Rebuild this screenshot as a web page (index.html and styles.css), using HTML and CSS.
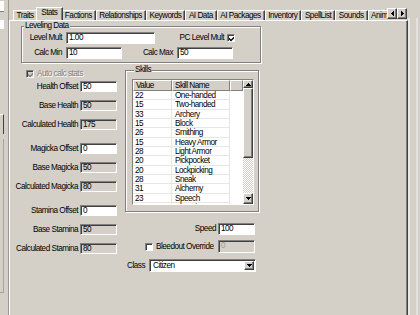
FILE: index.html
```html
<!DOCTYPE html>
<html lang="en">
<head>
    <meta charset="UTF-8">
    <meta name="viewport" content="width=device-width, initial-scale=1.0">
    <title>Actor - Stats</title>
    <link rel="stylesheet" href="styles.css">
</head>
<body>
<div class="window">
    <div class="side">
        <div class="stub stub-a"></div>
        <div class="stub stub-b"></div>
        <div class="stub stub-c"></div>
        <div class="stub-line"></div>
    </div>

    <div class="tabctl">
        <div class="tabbar">
            <div class="tabs">
                <div class="tab">Traits</div>
                <div class="tab active">Stats</div>
                <div class="tab">Factions</div>
                <div class="tab">Relationships</div>
                <div class="tab">Keywords</div>
                <div class="tab">AI Data</div>
                <div class="tab">AI Packages</div>
                <div class="tab">Inventory</div>
                <div class="tab">SpellList</div>
                <div class="tab">Sounds</div>
                <div class="tab">Animation</div>
            </div>
            <div class="tabscroll">
                <div class="btn"><svg width="3" height="5"><path d="M0 2h1v1H0z M1 1h1v3H1z M2 0h1v5H2z"/></svg></div>
                <div class="btn"><svg width="3" height="5"><path d="M2 2h1v1H2z M1 1h1v3H1z M0 0h1v5H0z"/></svg></div>
            </div>
        </div>

        <div class="page">
            <fieldset class="group leveling">
                <legend>Leveling Data</legend>
                <div class="lv-row">
                    <span class="lbl lv-lbl">Level Mult</span>
                    <div class="edit w-lm">1.00</div>
                    <span class="lbl pcl">PC Level Mult</span>
                    <div class="chk"><svg width="6" height="6"><path d="M0 1.6L2 3.6L5.6 0V1.9L2 5.5L0 3.5Z"/></svg></div>
                </div>
                <div class="lv-row">
                    <span class="lbl lv-lbl">Calc Min</span>
                    <div class="edit w-cm">10</div>
                    <span class="lbl cmx">Calc Max</span>
                    <div class="edit w-cm">50</div>
                </div>
            </fieldset>

            <div class="cols">
                <div class="stats-col">
                    <div class="autocalc">
                        <div class="chk dis"><svg width="6" height="6"><path d="M0 1.6L2 3.6L5.6 0V1.9L2 5.5L0 3.5Z"/></svg></div>
                        <span>Auto calc stats</span>
                    </div>

                    <div class="stat-group">
                        <div class="stat-row"><span class="lbl">Health Offset</span><div class="edit">50</div></div>
                        <div class="stat-row"><span class="lbl">Base Health</span><div class="edit ro">50</div></div>
                        <div class="stat-row"><span class="lbl">Calculated Health</span><div class="edit ro">175</div></div>
                    </div>
                    <div class="stat-group">
                        <div class="stat-row"><span class="lbl">Magicka Offset</span><div class="edit">0</div></div>
                        <div class="stat-row"><span class="lbl">Base Magicka</span><div class="edit ro">50</div></div>
                        <div class="stat-row"><span class="lbl">Calculated Magicka</span><div class="edit ro">80</div></div>
                    </div>
                    <div class="stat-group">
                        <div class="stat-row"><span class="lbl">Stamina Offset</span><div class="edit">0</div></div>
                        <div class="stat-row"><span class="lbl">Base Stamina</span><div class="edit ro">50</div></div>
                        <div class="stat-row"><span class="lbl">Calculated Stamina</span><div class="edit ro">80</div></div>
                    </div>
                </div>

                <div class="skills-col">
                    <fieldset class="group skills">
                        <legend>Skills</legend>
                        <div class="listview">
                            <div class="lv-main">
                                <div class="lv-head">
                                    <div class="hd c-val">Value</div>
                                    <div class="hd c-name">Skill Name</div>
                                    <div class="hd c-fill"></div>
                                </div>
                                <div class="lv-item"><span class="c-val">22</span><span class="c-name">One-handed</span></div>
                                <div class="lv-item"><span class="c-val">15</span><span class="c-name">Two-handed</span></div>
                                <div class="lv-item"><span class="c-val">33</span><span class="c-name">Archery</span></div>
                                <div class="lv-item"><span class="c-val">15</span><span class="c-name">Block</span></div>
                                <div class="lv-item"><span class="c-val">26</span><span class="c-name">Smithing</span></div>
                                <div class="lv-item"><span class="c-val">15</span><span class="c-name">Heavy Armor</span></div>
                                <div class="lv-item"><span class="c-val">28</span><span class="c-name">Light Armor</span></div>
                                <div class="lv-item"><span class="c-val">20</span><span class="c-name">Pickpocket</span></div>
                                <div class="lv-item"><span class="c-val">20</span><span class="c-name">Lockpicking</span></div>
                                <div class="lv-item"><span class="c-val">28</span><span class="c-name">Sneak</span></div>
                                <div class="lv-item"><span class="c-val">31</span><span class="c-name">Alchemy</span></div>
                                <div class="lv-item"><span class="c-val">23</span><span class="c-name">Speech</span></div>
                                <div class="lv-item"><span class="c-val">15</span><span class="c-name">Alteration</span></div>
                            </div>
                            <div class="vscroll">
                                <div class="btn sb-up"><svg width="5" height="3"><path d="M2 0h1v1H2z M1 1h3v1H1z M0 2h5v1H0z"/></svg></div>
                                <div class="btn sb-thumb"></div>
                                <div class="sb-track"></div>
                                <div class="btn sb-down"><svg width="5" height="3"><path d="M0 0h5v1H0z M1 1h3v1H1z M2 2h1v1H2z"/></svg></div>
                            </div>
                        </div>
                    </fieldset>

                    <div class="prop-row speed-row">
                        <span class="lbl">Speed</span>
                        <div class="edit w-sp">100</div>
                    </div>
                    <div class="prop-row bleed-row">
                        <div class="chk"></div>
                        <span class="bleed-lbl">Bleedout Override</span>
                        <div class="edit ro w-sp dim">0</div>
                    </div>
                    <div class="prop-row class-row">
                        <span class="cls-lbl">Class</span>
                        <div class="combo">
                            <span class="combo-text">Citizen</span>
                            <div class="btn"><svg width="5" height="3"><path d="M0 0h5v1H0z M1 1h3v1H1z M2 2h1v1H2z"/></svg></div>
                        </div>
                    </div>
                </div>
            </div>
        </div>
    </div>

    <div class="rightedge"></div>
</div>
</body>
</html>
```

FILE: styles.css
```css
* {
    box-sizing: border-box;
}
body {
    margin: 0;
    background: #d4d0c8;
    color: #000;
    font: 8.2px/10px "Liberation Sans", Arial, sans-serif;
    letter-spacing: -0.5px;
    overflow: hidden;
}
svg {
    display: block;
    fill: #000;
}
.window {
    display: flex;
    width: 420px;
    height: 315px;
}

/* left edge: bits of the neighbouring pane */
.side {
    width: 9px;
    display: flex;
    flex-direction: column;
    border-right: 1px solid #9c9891;
}
.stub {
    width: 4px;
    background: #fff;
}
.stub-a {
    height: 11px;
    margin-top: 1px;
    border-bottom: 1px solid #808080;
}
.stub-b {
    height: 9px;
    margin-top: 8px;
}
.stub-c {
    width: 4px;
    height: 20px;
    margin-top: 85px;
    background: #d4d0c8;
    border-top: 1px solid #fff;
    border-right: 1px solid #404040;
}
.stub-line {
    flex: 1;
    width: 4px;
    margin: 5px 0 22px;
    border-right: 1px solid #a8a49c;
    border-bottom: 1px solid #a8a49c;
}

/* tab control */
.tabctl {
    width: 399px;
    display: flex;
    flex-direction: column;
}
.tabbar {
    height: 20px;
    display: flex;
}
.tabs {
    width: 378px;
    display: flex;
    align-items: flex-end;
    padding-left: 4px;
    overflow: hidden;
}
.tab {
    flex: none;
    height: 10px;
    padding: 0 3px 0 2.5px;
    line-height: 9px;
    white-space: nowrap;
    border-top: 1px solid #fff;
    border-left: 1px solid #fff;
    border-right: 1px solid #404040;
    box-shadow: inset -1px 0 #808080;
}
.tab.active {
    position: relative;
    z-index: 1;
    height: 14px;
    margin: 0 -2px -1px;
    padding: 0 5px 0 4.5px;
    background: #d4d0c8;
}
.tabscroll {
    display: flex;
    margin-top: 8px;
}
.tabscroll .btn {
    width: 10px;
    height: 11px;
}
.btn {
    display: flex;
    align-items: center;
    justify-content: center;
    background: #d4d0c8;
    border: 1px solid;
    border-color: #fff #404040 #404040 #fff;
    box-shadow: inset -1px -1px #808080;
}
.page {
    flex: 1;
    border-top: 1px solid #fff;
    border-left: 1px solid #fff;
    border-right: 1px solid #404040;
    box-shadow: inset -1px 0 #808080;
}

/* group boxes */
.group {
    margin: 0;
    min-width: 0;
    border: 1px solid #808080;
    box-shadow: inset 1px 1px #fff, 1px 1px #fff;
}
.group legend {
    margin-left: 2px;
    padding: 0 1px;
    line-height: 10px;
    background: #d4d0c8;
}
.leveling {
    width: 240px;
    margin-left: 11px;
    padding: 1px 0 3px;
}
.lv-row {
    display: flex;
    align-items: center;
    height: 12px;
}
.lv-row + .lv-row {
    margin-top: 3px;
}
.lbl {
    text-align: right;
    white-space: nowrap;
}
.lv-lbl {
    width: 40px;
    margin-right: 4px;
}
.pcl {
    width: 69px;
    margin-right: 3px;
}
.cmx {
    width: 51px;
    margin-right: 4px;
}
.w-lm {
    width: 89px;
}
.w-cm {
    width: 56px;
}

/* edit boxes & checkboxes */
.edit {
    height: 12px;
    padding-left: 2px;
    line-height: 10px;
    white-space: nowrap;
    overflow: hidden;
    background: #fff;
    border: 1px solid;
    border-color: #808080 #fff #fff #808080;
    box-shadow: inset 1px 1px #404040;
}
.edit.ro {
    background: #d4d0c8;
}
.edit.dim {
    color: #a09c94;
}
.chk {
    flex: none;
    width: 8px;
    height: 8px;
    display: flex;
    align-items: center;
    justify-content: center;
    background: #fff;
    border: 1px solid;
    border-color: #808080 #fff #fff #808080;
    box-shadow: inset 1px 1px #404040;
}
.chk svg {
    margin: 1px 0 0 1px;
}
.chk.dis {
    background: #d4d0c8;
}
.chk.dis svg {
    fill: #808080;
}

/* lower area */
.cols {
    display: flex;
}
.stats-col {
    width: 111px;
}
.autocalc {
    display: flex;
    align-items: center;
    gap: 3px;
    height: 8px;
    margin: 7px 0 0 16px;
    color: #808080;
}
.autocalc span {
    text-shadow: 1px 1px #fff;
}
.stat-group {
    margin-top: 13px;
}
.autocalc + .stat-group {
    margin-top: 3px;
}
.stat-row {
    display: flex;
    align-items: center;
    height: 11px;
}
.stat-row + .stat-row {
    margin-top: 8px;
}
.stat-row .lbl {
    width: 68px;
    margin-right: 2px;
}
.stat-row .edit {
    width: 37px;
    height: 11px;
    line-height: 9px;
}

.skills-col {
    width: 135px;
    margin-left: 4px;
}
.skills {
    width: 134px;
    margin-top: 2px;
    padding: 4px 4px 6px 6px;
}

/* list view */
.listview {
    display: flex;
    height: 126px;
    background: #fff;
    border: 1px solid;
    border-color: #808080 #fff #fff #808080;
}
.lv-main {
    flex: 1;
    overflow: hidden;
}
.lv-head {
    display: flex;
    height: 11px;
}
.hd {
    height: 11px;
    padding-left: 2px;
    line-height: 9px;
    background: #d4d0c8;
    border-top: 1px solid #fff;
    border-left: 1px solid #fff;
    border-right: 1px solid #808080;
    border-bottom: 1px solid #808080;
}
.c-val {
    width: 39px;
}
.c-name {
    width: 58px;
}
.hd.c-fill {
    flex: 1;
}
.lv-item {
    display: flex;
    height: 9.33px;
    line-height: 9px;
}
.lv-item span {
    padding-left: 2px;
    white-space: nowrap;
    border-right: 1px solid #e6e6e6;
    border-bottom: 1px solid #e6e6e6;
}
.lv-item .c-name {
    padding-left: 3px;
}
.vscroll {
    width: 10px;
    display: flex;
    flex-direction: column;
}
.sb-up {
    height: 8px;
}
.sb-thumb {
    height: 70px;
}
.sb-track {
    flex: 1;
    background: repeating-conic-gradient(#fff 0 25%, #d4d0c8 0 50%) 0 0 / 2px 2px;
}
.sb-down {
    height: 11px;
}

/* speed / bleedout / class */
.prop-row {
    display: flex;
    align-items: center;
}
.speed-row {
    justify-content: flex-end;
    height: 12px;
    margin-top: 11px;
    padding-right: 5px;
}
.speed-row .lbl {
    margin-right: 2px;
}
.w-sp {
    width: 37px;
}
.bleed-row {
    height: 13px;
    margin-top: 5px;
    padding: 0 5px 0 20px;
}
.bleed-lbl {
    margin-left: 3px;
    white-space: nowrap;
}
.bleed-row .edit {
    flex: none;
    height: 13px;
    margin-left: auto;
}
.class-row {
    height: 13px;
    margin-top: 6px;
}
.cls-lbl {
    width: 20px;
    margin: 0 2px;
}
.combo {
    display: flex;
    width: 107px;
    height: 13px;
    padding: 1px;
    background: #fff;
    border: 1px solid;
    border-color: #808080 #fff #fff #808080;
    box-shadow: inset 1px 1px #404040;
}
.combo-text {
    flex: 1;
    padding-left: 2px;
    line-height: 9px;
}
.combo .btn {
    width: 10px;
}

/* right edge: splitter */
.rightedge {
    flex: 1;
    margin-top: 18px;
    background: linear-gradient(to right, #ebe9e5 0 2px, #d4d0c8 2px 8px, #e4e2de 8px 10px, #d4d0c8 10px);
}
```
